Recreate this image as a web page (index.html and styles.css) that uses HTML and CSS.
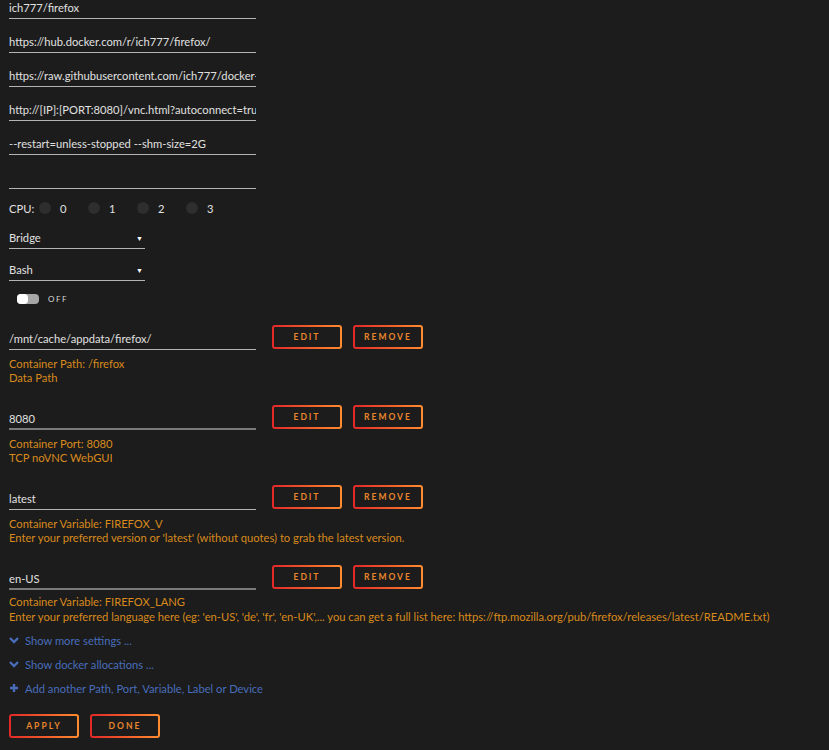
FILE: index.html
```html
<!doctype html>
<html lang="en">
<head>
	<meta charset="UTF-8">
	<title>Update Container</title>
	<link rel="stylesheet" href="styles.css">
</head>
<body>
<div class="form">
	<div class="field">ich777/firefox</div>
	<div class="field">https://hub.docker.com/r/ich777/firefox/</div>
	<div class="field">https://raw.githubusercontent.com/ich777/docker-templates/master/ich777/images/firefox.png</div>
	<div class="field">http://[IP]:[PORT:8080]/vnc.html?autoconnect=true&amp;reconnect=true</div>
	<div class="field">--restart=unless-stopped --shm-size=2G</div>
	<div class="field"></div>

	<div class="cpus">
		<span class="cpus_label">CPU:</span>
		<span class="cpu"><i class="dot"></i>0</span>
		<span class="cpu"><i class="dot"></i>1</span>
		<span class="cpu"><i class="dot"></i>2</span>
		<span class="cpu"><i class="dot"></i>3</span>
	</div>

	<div class="select">Bridge<span class="arrow">&#9660;</span></div>
	<div class="select">Bash<span class="arrow">&#9660;</span></div>

	<div class="switch"><span class="switch_track"><span class="switch_knob"></span></span>OFF</div>

	<!-- config entries -->
	<div class="entry">
		<div class="entry_row">
			<div class="field">/mnt/cache/appdata/firefox/</div>
			<button class="btn">Edit</button>
			<button class="btn">Remove</button>
		</div>
		<div class="desc">Container Path: /firefox<br>Data Path</div>
	</div>
	<div class="entry">
		<div class="entry_row">
			<div class="field field_dim">8080</div>
			<button class="btn">Edit</button>
			<button class="btn">Remove</button>
		</div>
		<div class="desc">Container Port: 8080<br>TCP noVNC WebGUI</div>
	</div>
	<div class="entry">
		<div class="entry_row">
			<div class="field">latest</div>
			<button class="btn">Edit</button>
			<button class="btn">Remove</button>
		</div>
		<div class="desc">Container Variable: FIREFOX_V<br>Enter your preferred version or 'latest' (without quotes) to grab the latest version.</div>
	</div>
	<div class="entry">
		<div class="entry_row">
			<div class="field field_dim">en-US</div>
			<button class="btn">Edit</button>
			<button class="btn">Remove</button>
		</div>
		<div class="desc desc_last">Container Variable: FIREFOX_LANG<br>Enter your preferred language here (eg: 'en-US', 'de', 'fr', 'en-UK',... you can get a full list here: https://ftp.mozilla.org/pub/firefox/releases/latest/README.txt)</div>
	</div>

	<div class="links">
		<a class="link" href="#"><svg class="ico" viewBox="0 0 10 10"><path d="M1 3l4 4 4-4" fill="none" stroke="currentColor" stroke-width="2.4"/></svg>Show more settings ...</a>
		<a class="link" href="#"><svg class="ico" viewBox="0 0 10 10"><path d="M1 3l4 4 4-4" fill="none" stroke="currentColor" stroke-width="2.4"/></svg>Show docker allocations ...</a>
		<a class="link" href="#"><svg class="ico" viewBox="0 0 10 10"><path d="M5 1v8M1 5h8" fill="none" stroke="currentColor" stroke-width="2.4"/></svg>Add another Path, Port, Variable, Label or Device</a>
	</div>

	<div class="actions">
		<button class="btn">Apply</button>
		<button class="btn">Done</button>
	</div>
</div>
</body>
</html>
```

FILE: styles.css
```css
body{margin: 0;background: #1c1c1c;color: #e0e0e0;font-family: Lato, "Liberation Sans", sans-serif;font-size: 11.2px;}
.form{padding: 0 9px;margin-top: -2px;}
.field{width: 247px;height: 20px;line-height: 20px;border-bottom: 1px solid #b4b4b4;margin-bottom: 13px;white-space: nowrap;overflow: hidden;}
.field_dim{border-bottom: 2px solid #7a7a7a;height: 19px;}

/* cpu pinning */
.cpus{display: flex;align-items: center;height: 14px;margin-top: -1px;}
.cpus_label{width: 30px;}
.cpu{display: flex;align-items: center;width: 49px;}
.dot{display: inline-block;width: 12px;height: 12px;border-radius: 50%;background: #2e2e2e;margin-right: 9px;}

.select{position: relative;width: 136px;height: 20px;line-height: 20px;border-bottom: 1px solid #b4b4b4;margin-top: 13px;}
.select + .select{margin-top: 11px;}
.arrow{position: absolute;right: 2px;top: 0;font-size: 7px;color: #fff;}

.switch{display: flex;align-items: center;height: 12px;margin: 12px 0 0 8px;font-size: 8px;letter-spacing: 1.5px;color: #d8d8d8;}
.switch_track{position: relative;width: 22px;height: 10px;border-radius: 4px;background: #a6a6a6;margin-right: 9px;}
.switch_knob{position: absolute;left: 0;top: 0;width: 11px;height: 10px;border-radius: 4px;background: #fff;}

.entry{margin-top: 20px;}
.entry_row{display: flex;align-items: flex-end;height: 25px;}
.entry_row .field{margin: 0 16px 0 0;}
.entry_row .btn + .btn{margin-left: 11px;}
.desc{color: #d88a1c;line-height: 14px;margin-top: 7px;white-space: nowrap;}
.desc_last{line-height: 15px;margin-top: 4px;}
.entry + .entry{margin-top: 20px;}

.btn{width: 70px;height: 24px;padding: 0;border: 2px solid transparent;border-radius: 3px;background: linear-gradient(#1c1c1c,#1c1c1c) padding-box,linear-gradient(90deg,#e22828,#ff8c2f) border-box;color: #e9862c;font-family: Lato, "Liberation Sans", sans-serif;font-size: 8.5px;font-weight: bold;letter-spacing: 2px;text-transform: uppercase;align-self: flex-start;}

.links{margin-top: 9px;}
.link{display: flex;align-items: center;height: 14px;margin-bottom: 10px;color: #486dba;text-decoration: none;}
.ico{width: 10px;height: 10px;margin-right: 6px;}

.actions{display: flex;gap: 11px;margin-top: 19px;}
```
